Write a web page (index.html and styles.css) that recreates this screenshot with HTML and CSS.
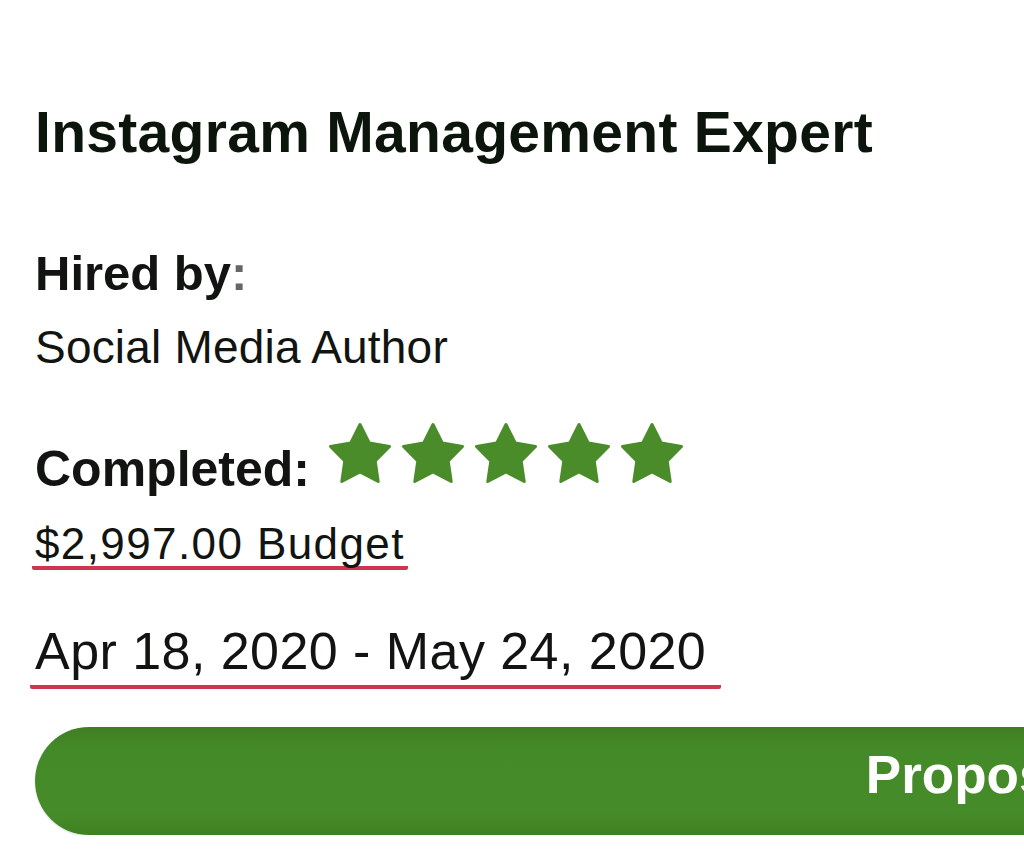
FILE: index.html
```html
<!DOCTYPE html>
<html lang="en">
<head>
    <meta charset="UTF-8">
    <meta name="viewport" content="width=device-width, initial-scale=1.0">
    <title>Instagram Management Expert</title>
    <link rel="stylesheet" href="styles.css">
</head>
<body>
    <div class="job-card">
        <h1 class="job-title">Instagram Management Expert</h1>

        <div class="hired-by">Hired by<span class="colon">:</span></div>
        <div class="client-role">Social Media Author</div>

        <!-- 評価 -->
        <div class="rating-row">
            <span class="rating-label">Completed:</span>
            <div class="stars">
                <svg class="star" viewBox="0 0 64 67"><path d="M32 4.5L41.4 23.1 61.5 26.4 47.2 40.9 50.2 61.5 32 52 13.8 61.5 16.8 40.9 2.5 26.4 22.6 23.1z"/></svg>
                <svg class="star" viewBox="0 0 64 67"><path d="M32 4.5L41.4 23.1 61.5 26.4 47.2 40.9 50.2 61.5 32 52 13.8 61.5 16.8 40.9 2.5 26.4 22.6 23.1z"/></svg>
                <svg class="star" viewBox="0 0 64 67"><path d="M32 4.5L41.4 23.1 61.5 26.4 47.2 40.9 50.2 61.5 32 52 13.8 61.5 16.8 40.9 2.5 26.4 22.6 23.1z"/></svg>
                <svg class="star" viewBox="0 0 64 67"><path d="M32 4.5L41.4 23.1 61.5 26.4 47.2 40.9 50.2 61.5 32 52 13.8 61.5 16.8 40.9 2.5 26.4 22.6 23.1z"/></svg>
                <svg class="star" viewBox="0 0 64 67"><path d="M32 4.5L41.4 23.1 61.5 26.4 47.2 40.9 50.2 61.5 32 52 13.8 61.5 16.8 40.9 2.5 26.4 22.6 23.1z"/></svg>
            </div>
        </div>

        <div class="budget"><span class="marked">$2,997.00 Budget</span></div>
        <div class="period"><span class="marked marked-long">Apr 18, 2020 - May 24, 2020</span></div>

        <button class="proposal-btn">Proposals</button>
    </div>
</body>
</html>
```

FILE: styles.css
```css
/* ベース */
body {
    margin: 0;
    background-color: #ffffff;
    font-family: "Liberation Sans", Arial, sans-serif;
    color: #111411;
    overflow: hidden;
}
.job-card {
    padding: 104px 0 0 35px;
}
.job-title {
    margin: 0;
    font-size: 57px;
    line-height: 1;
    font-weight: bold;
    letter-spacing: 0.3px;
    color: #0c150c;
}
.hired-by {
    margin-top: 88px;
    font-size: 49px;
    line-height: 1;
    font-weight: bold;
}
.hired-by .colon {
    color: #666666;
}
.client-role {
    margin-top: 26px;
    font-size: 46px;
    line-height: 1;
    letter-spacing: 0.2px;
}

/* 評価の行 */
.rating-row {
    margin-top: 50px;
    display: flex;
    align-items: flex-end;
}
.rating-label {
    font-size: 50px;
    line-height: 1;
    font-weight: bold;
}
.stars {
    display: flex;
    gap: 9px;
    margin-left: 18px;
    margin-bottom: 7px;
}
.star {
    width: 64px;
    height: 67px;
    fill: #4a8c2a;
    stroke: #4a8c2a;
    stroke-width: 3;
    stroke-linejoin: round;
}

/* 赤い下線 */
.budget {
    margin-top: 28px;
    font-size: 44px;
    line-height: 1;
    letter-spacing: 1.4px;
}
.period {
    margin-top: 55px;
    font-size: 52px;
    line-height: 1;
    letter-spacing: 0.45px;
}
.marked {
    display: inline-block;
    margin-left: -3px;
    padding: 0 3px 0 3px;
    border-bottom: 4px solid #cc3650;
    border-radius: 2px;
}
.marked-long {
    margin-left: -5px;
    padding: 0 15px 8px 5px;
}

/* ボタン */
.proposal-btn {
    margin-top: 38px;
    width: 1918px;
    height: 108px;
    padding: 0 0 14px;
    border: none;
    border-radius: 54px;
    background: linear-gradient(#3f7f22, #458a28 20%, #468b29 80%, #3f8022);
    box-shadow: 0 1px 2px rgba(0, 0, 0, 0.15);
    color: #ffffff;
    font-family: "Liberation Sans", Arial, sans-serif;
    font-size: 53px;
    font-weight: bold;
    line-height: 1;
    text-align: center;
    cursor: pointer;
}
```
